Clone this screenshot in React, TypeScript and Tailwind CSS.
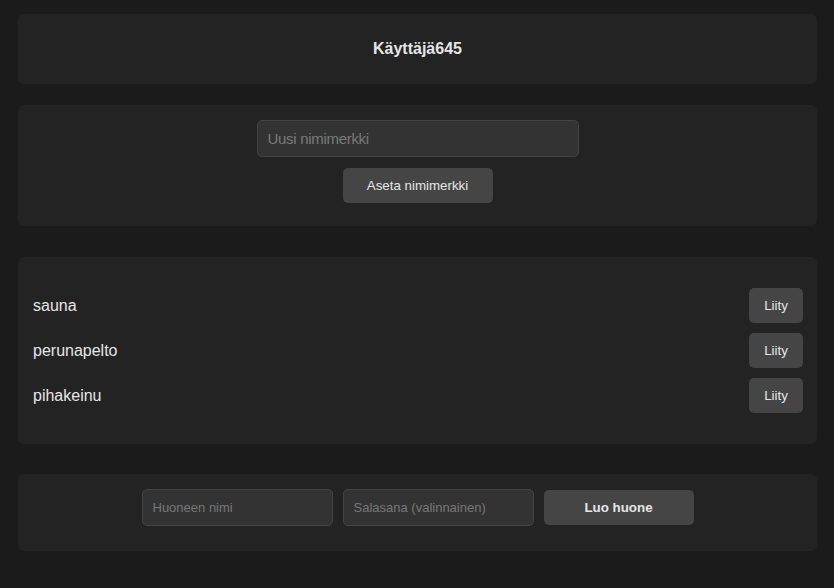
import { useState } from 'react'

const HUONEET = ['sauna', 'perunapelto', 'pihakeinu']

export default function App() {
  const [nimi, setNimi] = useState('')
  const [huone, setHuone] = useState('')
  const [salasana, setSalasana] = useState('')

  return (
    <div className="min-h-[588px] bg-[#1b1b1b] pl-[18px] pr-[17px] pt-[14px] pb-8 text-[#e6e6e6] font-['Liberation_Sans',Arial,sans-serif]">

      {/* ── Käyttäjä ── */}
      <div className="flex h-[70px] items-center justify-center rounded-md bg-[#232323]">
        <h2 className="text-[16px] font-bold">Käyttäjä645</h2>
      </div>

      {/* ── Nimimerkki ── */}
      <div className="mt-[21px] flex flex-col items-center gap-[11px] rounded-md bg-[#232323] pt-[15px] pb-[23px]">
        <input
          value={nimi}
          onChange={e => setNimi(e.target.value)}
          placeholder="Uusi nimimerkki"
          className="h-[37px] w-[322px] rounded-[5px] border border-[#444] bg-[#333] px-[10px] text-[15px] tracking-[-0.3px] text-[#e6e6e6] outline-none placeholder:text-[#7a7a7a]"
        />
        <button className="h-[35px] w-[150px] rounded-[5px] bg-[#454545] text-[13.33px] text-[#e6e6e6]">
          Aseta nimimerkki
        </button>
      </div>

      {/* ── Huoneet ── */}
      <div className="mt-[31px] flex flex-col gap-[10px] rounded-md bg-[#232323] pl-[15px] pr-[14px] py-[31px]">
        {HUONEET.map(h => (
          <div key={h} className="flex h-[35px] items-center justify-between">
            <span className="text-[16px]">{h}</span>
            <button className="h-[35px] w-[54px] rounded-[5px] bg-[#454545] text-[13.33px] text-[#e6e6e6]">
              Liity
            </button>
          </div>
        ))}
      </div>

      {/* ── Luo huone ── */}
      <div className="mt-[30px] flex items-center justify-center gap-[10px] rounded-md bg-[#232323] pt-[15px] pb-[25px]">
        <input
          value={huone}
          onChange={e => setHuone(e.target.value)}
          placeholder="Huoneen nimi"
          className="h-[37px] w-[191px] rounded-[5px] border border-[#444] bg-[#333] px-[10px] text-[13px] text-[#e6e6e6] outline-none placeholder:text-[#777]"
        />
        <input
          value={salasana}
          onChange={e => setSalasana(e.target.value)}
          placeholder="Salasana (valinnainen)"
          className="h-[37px] w-[191px] rounded-[5px] border border-[#444] bg-[#333] px-[10px] text-[13px] text-[#e6e6e6] outline-none placeholder:text-[#777]"
        />
        <button className="h-[35px] w-[150px] rounded-[5px] bg-[#454545] text-[13.33px] font-bold text-[#e6e6e6]">
          Luo huone
        </button>
      </div>
    </div>
  )
}
